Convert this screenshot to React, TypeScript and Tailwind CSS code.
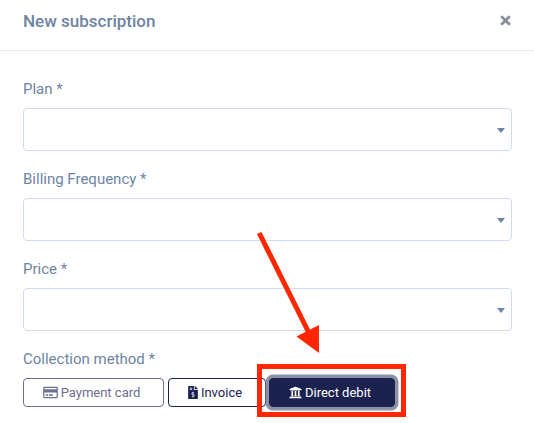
import { ReactNode } from "react";
import { FaFileInvoiceDollar, FaRegCreditCard, FaUniversity } from "react-icons/fa";

interface SelectFieldProps {
  label: string;
}

function SelectField({ label }: SelectFieldProps) {
  return (
    <div className="mb-[17px]">
      <label className="block h-[30px] text-[15px] leading-[22px]">{label} *</label>
      <button
        aria-label={label}
        className="flex h-[43px] w-full items-center justify-end rounded-[4px] border border-[#d2ddec] bg-white pr-[6px]"
      >
        <span className="mt-px border-x-[4px] border-t-[5px] border-x-transparent border-t-[#6e84a3]" />
      </button>
    </div>
  );
}

interface MethodBtnProps {
  icon: ReactNode;
  text: string;
  className: string;
}

function MethodBtn({ icon, text, className }: MethodBtnProps) {
  return (
    <button
      className={`flex h-[29px] items-center justify-center rounded-[4px] border pr-1 text-[13px] leading-none whitespace-nowrap ${className}`}
    >
      {icon}
      {text}
    </button>
  );
}

export default function App() {
  return (
    <div className="relative h-[423px] w-[534px] overflow-hidden bg-white font-[Roboto,sans-serif] text-[#6e84a3]">
      <header className="flex h-[51px] items-start justify-between border-b border-[#e3ebf6] pr-[23px] pl-[23px]">
        <h1 className="mt-[9px] text-[17px] leading-6 font-medium">New subscription</h1>
        <button aria-label="Close" className="mt-[15px]">
          <svg className="h-[11px] w-[11px]" viewBox="0 0 11 11" fill="none">
            <path d="M1.2 1.2L9.8 9.8M9.8 1.2L1.2 9.8" stroke="#868e9c" strokeWidth="2.7" />
          </svg>
        </button>
      </header>
      <main className="pt-[27px] pr-[22px] pl-[23px]">
        <SelectField label="Plan" />
        <SelectField label="Billing Frequency" />
        <SelectField label="Price" />
        <p className="h-[30px] text-[15px] leading-[22px]">Collection method *</p>
        <div className="flex">
          <MethodBtn
            icon={<FaRegCreditCard className="mr-[3px] h-[13px] w-[15px]" />}
            text="Payment card"
            className="mr-1 w-[141px] border-[#6c6e92] text-[#6c6e92]"
          />
          <MethodBtn
            icon={<FaFileInvoiceDollar className="mr-[3px] h-[13px] w-[10px]" />}
            text="Invoice"
            className="mr-[3px] w-[98px] border-[#1b2250] text-[#1b2250]"
          />
          <MethodBtn
            icon={<FaUniversity className="mr-[3px] h-[13px] w-[13px]" />}
            text="Direct debit"
            className="w-[126px] border-[#1b2250] bg-[#1b2250] text-white ring-[3.5px] ring-[#8d91a8]"
          />
        </div>
      </main>

      {/* callout pointing at the selected method */}
      <div className="absolute top-[364px] left-[257px] h-[53px] w-[149px] border-5 border-[#ff2600]" />
      <svg className="absolute top-0 left-0 h-[423px] w-[534px]" viewBox="0 0 534 423">
        <path d="M259.2 233L310 335" stroke="#ff2600" strokeWidth="5" />
        <path d="M296.5 336.5L319 325V353Z" fill="#ff2600" />
      </svg>
    </div>
  );
}
